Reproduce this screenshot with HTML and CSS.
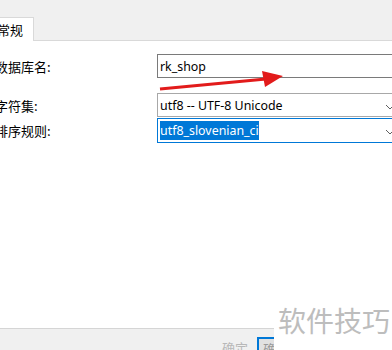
FILE: index.html
```html
<!DOCTYPE html>
<html lang="zh-CN">
	<head>
		<meta charset="UTF-8" />
		<meta name="viewport" content="width=device-width, initial-scale=1.0" />
		<title>新建数据库</title>
		<link rel="stylesheet" href="styles.css">
	</head>

	<body>
		<div class="dialog">
			<div class="tabbar">
				<div class="tab">常规</div>
			</div>

			<div class="form">
				<div class="row">
					<label class="label">数据库名:</label>
					<div class="field input">rk_shop</div>
				</div>
				<div class="row row-select">
					<label class="label">字符集:</label>
					<div class="field select">
						<span>utf8 -- UTF-8 Unicode</span>
						<svg class="chevron" width="10" height="6" viewBox="0 0 10 6"><polyline points="1,1 5,5 9,1" fill="none" stroke="#606060" stroke-width="1" /></svg>
					</div>
				</div>
				<div class="row">
					<label class="label">排序规则:</label>
					<div class="field select focused">
						<span class="selected">utf8_slovenian_ci</span>
						<svg class="chevron" width="10" height="6" viewBox="0 0 10 6"><polyline points="1,1 5,5 9,1" fill="none" stroke="#606060" stroke-width="1" /></svg>
					</div>
				</div>
			</div>

			<!-- Footer with buttons -->
			<div class="footer">
				<span class="hint">确定</span>
				<div class="button">确</div>
			</div>
		</div>

		<!-- Annotation arrow over the form -->
		<svg class="arrow" width="392" height="350" viewBox="0 0 392 350">
			<line x1="160" y1="89" x2="266" y2="79" stroke="#e21b1b" stroke-width="3" />
			<polygon points="283,76 262,71 265,87" fill="#e21b1b" />
		</svg>

		<div class="watermark">软件技巧</div>
	</body>
</html>
```

FILE: styles.css
```css
:root {
	--bar-bg: #f0f0f0;
	--line-color: #d9d9d9;
	--field-border: #7a7a7a;
	--focus-color: #0078d7;
}

body {
	margin: 0;
	width: 392px;
	height: 350px;
	overflow: hidden;
	position: relative;
	background: #fff;
	font-family: "Noto Sans", "Noto Sans CJK SC", sans-serif;
	font-size: 13px;
	color: #000;
}

.dialog {
	display: flex;
	flex-direction: column;
	height: 350px;
}

/* Tab strip */
.tabbar {
	height: 40px;
	background-color: var(--bar-bg);
	border-bottom: 1px solid var(--line-color);
	display: flex;
	align-items: flex-end;
}

.tab {
	height: 23px;
	margin-left: -10px;
	margin-bottom: -1px;
	padding: 0 10px 0 6px;
	background: #fff;
	border: 1px solid var(--line-color);
	border-bottom: none;
	display: flex;
	align-items: center;
	font-family: "Noto Sans CJK SC", sans-serif;
}

/* Form rows */
.form {
	flex: 1;
	padding-top: 13px;
	display: flex;
	flex-direction: column;
}

.row {
	display: flex;
	align-items: center;
}

.row-select {
	margin-top: 15px;
	margin-bottom: 1px;
}

.label {
	width: 162px;
	margin-left: -5px;
	flex-shrink: 0;
	font-family: "Noto Sans CJK SC", sans-serif;
}

.field {
	width: 250px;
	flex-shrink: 0;
	height: 22px;
	box-sizing: content-box;
	border: 1px solid var(--field-border);
	display: flex;
	align-items: center;
	padding-left: 2px;
	position: relative;
	font-size: 12.4px;
}

.select {
	border-color: #a8a8a8;
}

.select.focused {
	height: 23px;
	border-color: var(--focus-color);
}

.selected {
	background-color: var(--focus-color);
	color: #fff;
	line-height: 19px;
}

.chevron {
	position: absolute;
	left: 227px;
	top: 10px;
}

/* Bottom bar */
.footer {
	height: 21px;
	background-color: var(--bar-bg);
	border-top: 1px solid #d5d5d5;
	display: flex;
	align-items: flex-start;
	padding-left: 222px;
}

.hint {
	margin-top: 9px;
	color: #b8b8b8;
	font-family: "Noto Sans CJK SC", sans-serif;
	width: 35px;
}

.button {
	margin-top: 8px;
	width: 60px;
	height: 20px;
	background: #e1e1e1;
	border: 2px solid var(--focus-color);
	color: #999;
	padding-left: 4px;
	font-family: "Noto Sans CJK SC", sans-serif;
}

.arrow {
	position: absolute;
	left: 0;
	top: 0;
	pointer-events: none;
}

.watermark {
	position: absolute;
	left: 274px;
	top: 296px;
	width: 118px;
	height: 54px;
	background: #fff;
	color: #bdbdbd;
	font-family: "Noto Sans CJK SC", sans-serif;
	font-size: 28px;
	padding-left: 4px;
	box-sizing: border-box;
	line-height: 48px;
}
```
